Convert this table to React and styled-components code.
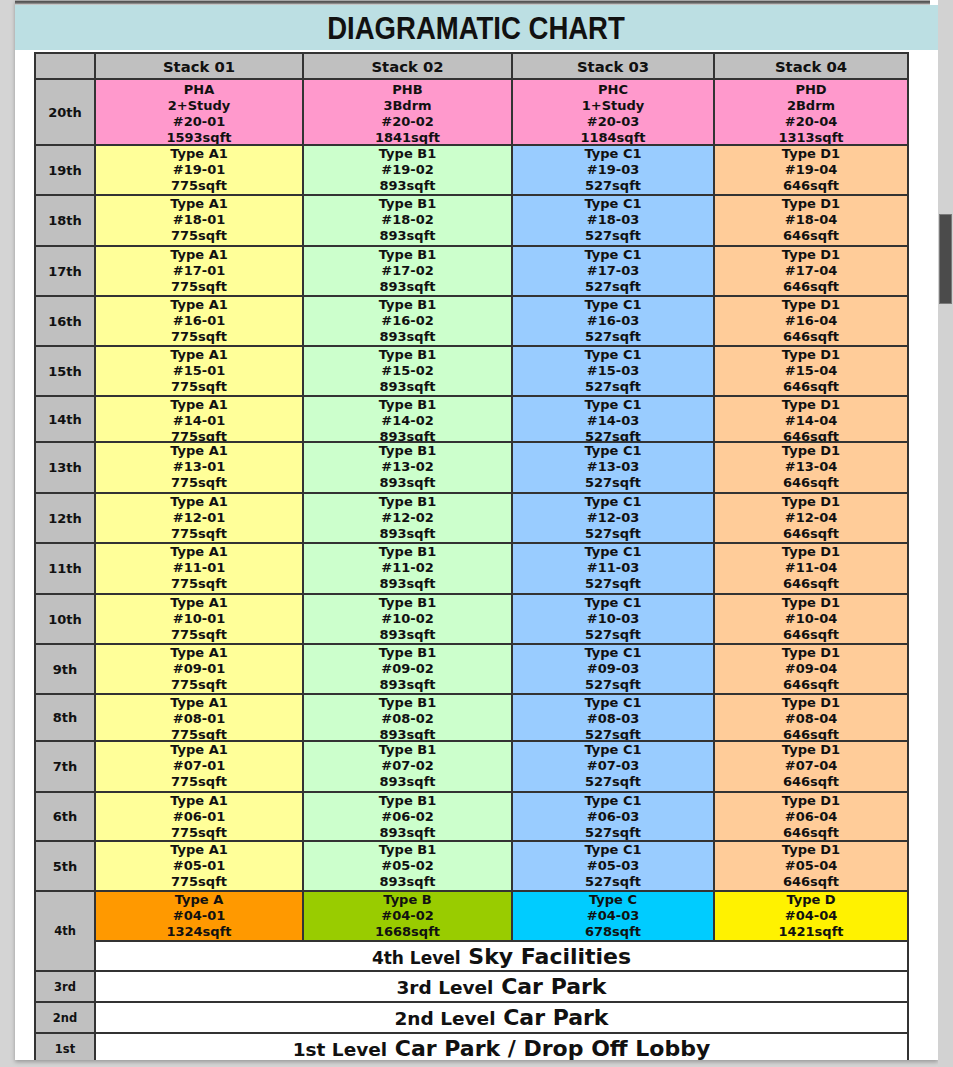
import React from "react";
import styled, { createGlobalStyle } from "styled-components";

const Global = createGlobalStyle`
  html, body { margin: 0; padding: 0; }
  body {
    background: #d4d4d4;
    overflow: hidden;
    font-family: "DejaVu Sans", Verdana, sans-serif;
  }
`;

const Viewport = styled.div`
  display: flex;
  height: 1067px;
  padding-left: 15px;
  box-sizing: border-box;
`;

const Page = styled.div`
  width: 923px;
  height: 1060px;
  background: #ffffff;
  overflow: hidden;
  display: flex;
  flex-direction: column;
  box-shadow: 0 2px 4px rgba(0, 0, 0, 0.28);
`;

const TopShadow = styled.div`
  height: 5px;
  margin-right: 8px;
  flex: none;
  background: linear-gradient(
    to bottom,
    #d0d0d0 0px,
    #555555 1.5px,
    #6a6a6a 3px,
    #e4e4e4 5px
  );
`;

const TitleBand = styled.div`
  flex: none;
  height: 45px;
  background: #bcdfe3;
  text-align: center;
  line-height: 46px;
`;

const Title = styled.span`
  display: inline-block;
  font-family: "Liberation Sans", Arial, sans-serif;
  font-weight: 700;
  font-size: 32px;
  color: #111;
  transform: scaleX(0.86);
`;

const Table = styled.div`
  flex: none;
  margin: 2px 0 0 19px;
  display: grid;
  width: max-content;
  grid-template-columns: 58px 206px 207px 200px 192px;
  grid-template-rows: ${(p) => p.$rows.map((r) => `${r}px`).join(" ")};
  gap: 2px;
  padding: 2px;
  background: #333333;
`;

const HeadCell = styled.div`
  background: #c0c0c0;
  display: flex;
  align-items: center;
  justify-content: center;
  font-weight: 700;
  font-size: 14.8px;
  color: #111;
`;

const FloorLabel = styled.div`
  background: #c0c0c0;
  display: flex;
  align-items: center;
  justify-content: center;
  font-weight: 700;
  font-size: ${(p) => (p.$small ? "11.5px" : "13px")};
  color: #111;
  grid-row: ${(p) => (p.$span ? `span ${p.$span}` : "auto")};
`;

const Unit = styled.div`
  background: ${(p) => p.$bg};
  overflow: hidden;
  text-align: center;
  font-weight: 700;
  font-size: 13px;
  line-height: 16px;
  color: #111;
  padding-top: ${(p) => (p.$pad ? "2px" : "0")};
  box-sizing: border-box;
`;

const Line = styled.div`
  white-space: nowrap;
`;

const LevelBar = styled.div`
  grid-column: span 4;
  background: #ffffff;
  overflow: hidden;
  text-align: center;
  font-weight: 700;
  font-size: 22px;
  line-height: 24px;
  padding-top: 3px;
  box-sizing: border-box;
  color: #111;
  white-space: nowrap;
`;

const LevelSmall = styled.span`
  font-size: ${(p) => p.$size}px;
`;

const ScrollTrack = styled.div`
  width: 15px;
  height: 1067px;
  background: #d2d2d2;
  padding-left: 1px;
  box-sizing: border-box;
`;

const Thumb = styled.div`
  margin-top: 214px;
  width: 13px;
  height: 90px;
  background: #4b4b4b;
  border: 1px solid #7a7a7a;
  box-sizing: border-box;
`;

const stacks = [
  { type: "A1", suf: "01", sqft: 775, bg: "#ffff99" },
  { type: "B1", suf: "02", sqft: 893, bg: "#ccffcc" },
  { type: "C1", suf: "03", sqft: 527, bg: "#99ccff" },
  { type: "D1", suf: "04", sqft: 646, bg: "#ffcc99" },
];

const penthouses = [
  ["PHA", "2+Study", "#20-01", "1593sqft"],
  ["PHB", "3Bdrm", "#20-02", "1841sqft"],
  ["PHC", "1+Study", "#20-03", "1184sqft"],
  ["PHD", "2Bdrm", "#20-04", "1313sqft"],
];

const fourth = [
  ["Type A", "#04-01", "1324sqft", "#ff9900"],
  ["Type B", "#04-02", "1668sqft", "#99cc00"],
  ["Type C", "#04-03", "678sqft", "#00ccff"],
  ["Type D", "#04-04", "1421sqft", "#fff200"],
];

const floors = [
  [19, 48],
  [18, 49],
  [17, 48],
  [16, 48],
  [15, 48],
  [14, 44],
  [13, 49],
  [12, 48],
  [11, 49],
  [10, 48],
  [9, 48],
  [8, 45],
  [7, 49],
  [6, 47],
  [5, 48],
];

const pad = (n) => String(n).padStart(2, "0");

export default function App() {
  const rows = [24, 64, ...floors.map((f) => f[1]), 48, 28, 29, 29, 30];

  return (
    <>
      <Global />
      <Viewport>
        <Page>
          <TopShadow />
          <TitleBand>
            <Title>DIAGRAMATIC CHART</Title>
          </TitleBand>
          <Table $rows={rows}>
            <HeadCell />
            {["Stack 01", "Stack 02", "Stack 03", "Stack 04"].map((s) => (
              <HeadCell key={s}>{s}</HeadCell>
            ))}

            <FloorLabel>20th</FloorLabel>
            {penthouses.map((lines) => (
              <Unit key={lines[0]} $bg="#ff99cc" $pad>
                {lines.map((l) => (
                  <Line key={l}>{l}</Line>
                ))}
              </Unit>
            ))}

            {floors.map(([n]) => (
              <React.Fragment key={n}>
                <FloorLabel>{n}th</FloorLabel>
                {stacks.map((s) => (
                  <Unit key={s.suf} $bg={s.bg}>
                    <Line>Type {s.type}</Line>
                    <Line>
                      #{pad(n)}-{s.suf}
                    </Line>
                    <Line>{s.sqft}sqft</Line>
                  </Unit>
                ))}
              </React.Fragment>
            ))}

            <FloorLabel $small $span={2}>
              4th
            </FloorLabel>
            {fourth.map(([t, no, sq, bg]) => (
              <Unit key={no} $bg={bg}>
                <Line>{t}</Line>
                <Line>{no}</Line>
                <Line>{sq}</Line>
              </Unit>
            ))}
            <LevelBar>
              <LevelSmall $size={17}>4th Level</LevelSmall> Sky Facilities
            </LevelBar>

            <FloorLabel $small>3rd</FloorLabel>
            <LevelBar>
              <LevelSmall $size={18.5}>3rd Level</LevelSmall> Car Park
            </LevelBar>

            <FloorLabel $small>2nd</FloorLabel>
            <LevelBar>
              <LevelSmall $size={18.5}>2nd Level</LevelSmall> Car Park
            </LevelBar>

            <FloorLabel $small>1st</FloorLabel>
            <LevelBar>
              <LevelSmall $size={18.5}>1st Level</LevelSmall> Car Park / Drop
              Off Lobby
            </LevelBar>
          </Table>
        </Page>
        <ScrollTrack>
          <Thumb />
        </ScrollTrack>
      </Viewport>
    </>
  );
}
